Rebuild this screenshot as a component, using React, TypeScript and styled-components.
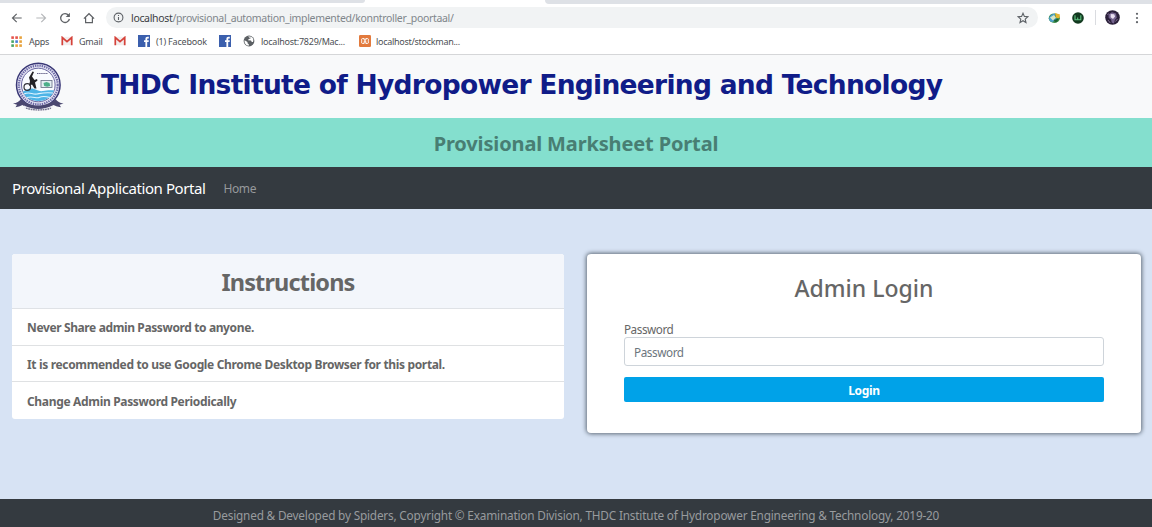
import React from "react";
import styled, { createGlobalStyle } from "styled-components";

const GlobalStyle = createGlobalStyle`
  * { box-sizing: border-box; }
  html, body { margin: 0; padding: 0; }
  body {
    background: #d7e3f4;
    font-family: "Noto Sans", "Open Sans", sans-serif;
    color: #666;
    overflow: hidden;
  }
`;

const Page = styled.div`
  display: flex;
  flex-direction: column;
  width: 1152px;
  height: 527px;
`;

const Label = styled.span<{ $ls?: number }>`
  letter-spacing: ${(p) => p.$ls ?? 0}px;
  white-space: nowrap;
`;

const TabStrip = styled.div`
  display: flex;
  justify-content: space-between;
  height: 4px;
  flex: none;
  background: #fff;
`;

const InactiveTabs = styled.div<{ $width: number; $side: "left" | "right" }>`
  width: ${(p) => p.$width}px;
  height: ${(p) => (p.$side === "left" ? 3 : 4)}px;
  background: #dee1e6;
  border-radius: ${(p) => (p.$side === "left" ? "0 0 4px 0" : "0 0 0 4px")};
`;

const Toolbar = styled.div`
  display: flex;
  align-items: center;
  height: 27px;
  flex: none;
  padding: 0 10px;
  background: #fff;
`;

const NavButtons = styled.div`
  display: flex;
  align-items: center;
  gap: 10px;
  width: 96px;
  svg { display: block; flex: none; }
`;

const AddressBar = styled.div`
  display: flex;
  align-items: center;
  width: 932px;
  height: 21px;
  padding: 0 9px 0 7px;
  border-radius: 11px;
  background: #f1f3f4;
  font-size: 10.5px;
  color: #80868b;
  svg { display: block; flex: none; }
`;

const Url = styled.div`
  flex: 1;
  margin-left: 7px;
  line-height: 20px;
`;

const Host = styled.span`
  color: #3c4043;
`;

const Extensions = styled.div`
  display: flex;
  align-items: center;
  gap: 11px;
  margin-left: 10px;
  svg { display: block; flex: none; }
`;

const Profile = styled.div`
  display: flex;
  align-items: center;
  gap: 15px;
  height: 15px;
  padding-left: 9px;
  border-left: 1px solid #dadce0;
`;

const Bookmarks = styled.div`
  display: flex;
  align-items: center;
  height: 24px;
  flex: none;
  padding: 0 0 3px 11px;
  background: #fff;
  border-bottom: 1px solid #d5d6d8;
  font-size: 9px;
  color: #4d5054;
`;

const Bookmark = styled.div<{ $width: number; $gap?: number }>`
  display: flex;
  align-items: center;
  gap: ${(p) => p.$gap ?? 6}px;
  width: ${(p) => p.$width}px;
  flex: none;
  svg { display: block; flex: none; }
`;

const Header = styled.header`
  display: flex;
  align-items: center;
  height: 63px;
  flex: none;
  padding-left: 12px;
  background: #f8f9fa;
  svg { display: block; flex: none; }
`;

const Title = styled.h1`
  margin: 0 0 3px 37px;
  font-family: "DejaVu Sans", Verdana, sans-serif;
  font-size: 26.5px;
  line-height: 32px;
  font-weight: 700;
  color: #101c88;
`;

const Banner = styled.div`
  display: flex;
  align-items: center;
  justify-content: center;
  height: 49px;
  flex: none;
  padding-top: 2px;
  background: #84dfce;
  font-size: 20px;
  font-weight: 700;
  color: #487e73;
`;

const Navbar = styled.nav`
  display: flex;
  align-items: center;
  height: 42px;
  flex: none;
  padding: 0 12px;
  background: #343a40;
  color: #fff;
  font-size: 15px;
`;

const NavLink = styled.a`
  margin-left: 18px;
  font-size: 12px;
  color: #96999c;
`;

const Main = styled.main`
  display: flex;
  align-items: flex-start;
  gap: 23px;
  flex: 1;
  padding: 45px 11px 0 12px;
  background: #d7e3f4;
`;

const Instructions = styled.section`
  width: 552px;
  height: 165px;
  border-radius: 3px;
  overflow: hidden;
  background: #fff;
`;

const CardHeader = styled.h2`
  display: flex;
  align-items: center;
  justify-content: center;
  height: 55px;
  margin: 0;
  padding-top: 2px;
  background: #f3f6fb;
  border-bottom: 1px solid #dfe2e6;
  font-size: 23.5px;
  font-weight: 700;
`;

const Item = styled.div<{ $last?: boolean }>`
  display: flex;
  align-items: center;
  height: 36.7px;
  padding: 2px 15px 0;
  border-bottom: ${(p) => (p.$last ? "none" : "1px solid #dfe1e3")};
  font-size: 12px;
  font-weight: 700;
`;

const LoginCard = styled.section`
  display: flex;
  flex-direction: column;
  width: 554px;
  flex: none;
  height: 179px;
  padding: 18px 37px 0 37px;
  border-radius: 4px;
  background: #fff;
  box-shadow: 0 0 4px 1px #5f6b78;
`;

const LoginTitle = styled.h2`
  margin: 0;
  text-align: center;
  font-size: 23px;
  line-height: 32px;
  font-weight: 500;
`;

const FieldLabel = styled.label`
  margin-top: 18px;
  font-size: 11.7px;
  line-height: 15px;
`;

const Field = styled.div`
  display: flex;
  align-items: center;
  height: 29px;
  padding: 1px 9px 0;
  border: 1px solid #ced4da;
  border-radius: 3px;
  font-size: 11.7px;
  color: #6c757d;
`;

const LoginButton = styled.button`
  height: 25px;
  margin-top: 11px;
  padding: 1px 0 0;
  border: 0;
  border-radius: 2px;
  background: #00a2e8;
  font-family: inherit;
  font-size: 12px;
  font-weight: 700;
  color: #fff;
`;

const Footer = styled.footer`
  display: flex;
  align-items: center;
  justify-content: center;
  height: 28px;
  flex: none;
  padding-top: 4px;
  background: #343a40;
  font-size: 11.8px;
  color: #989b9e;
`;

const Arrow = ({ color, flip }: { color: string; flip?: boolean }) => (
  <svg width="14" height="14" viewBox="0 0 14 14" fill="none" stroke={color} strokeWidth="1.2">
    <path d={flip ? "M2.3 7h9M7.3 2.8 11.5 7l-4.2 4.2" : "M11.7 7h-9M6.7 2.8 2.5 7l4.2 4.2"} />
  </svg>
);

const Reload = () => (
  <svg width="14" height="14" viewBox="0 0 14 14">
    <path d="M10.6 4.4A4.400 4.400 0 1 0 11.400 8" fill="none" stroke="#5f6266" strokeWidth="1.3" />
    <path d="M11.900 1.800v4.200H7.700z" fill="#5f6266" />
  </svg>
);

const Home = () => (
  <svg width="14" height="14" viewBox="0 0 14 14" fill="none" stroke="#5f6266" strokeWidth="1.2">
    <path d="M1.900 7.600 7 2.700l5.100 4.900M3.600 6.500v5.100h6.800V6.500" />
  </svg>
);

const Info = () => (
  <svg width="11" height="11" viewBox="0 0 11 11" fill="none" stroke="#5f6368" strokeWidth="1.1">
    <circle cx="5.5" cy="5.5" r="4.4" />
    <path d="M5.5 5v3M5.5 2.900v1.200" />
  </svg>
);

const Star = () => (
  <svg width="12" height="12" viewBox="0 0 12 12" fill="none" stroke="#5f6368" strokeWidth="1.1">
    <path d="m6 1.200 1.400 3.200 3.500.3-2.700 2.400.8 3.400-3-1.800-3 1.800.8-3.400L1.100 4.700l3.500-.3z" />
  </svg>
);

const DownloadManager = () => (
  <svg width="13" height="12" viewBox="0 0 13 12">
    <ellipse cx="6.300" cy="6.200" rx="5.600" ry="4.800" fill="#3c8d4b" />
    <path d="M1 6.500C1.500 3.500 4 1.500 7.500 1.400L6 5l3 2-4.500 3C2.500 10 1 8.500 1 6.500z" fill="#4d9fce" />
    <path d="M2 5.500 6 3l2 2.500L5 8.500z" fill="#d7e6c5" />
    <path d="m7 .9 5 1.500-.8 4-3.200-.6z" fill="#e5b52f" />
    <path d="m5.500 8 5.500-1.600L8 10.800z" fill="#1c6133" />
  </svg>
);

const GreenBadge = () => (
  <svg width="12" height="12" viewBox="0 0 12 12">
    <circle cx="6" cy="6" r="5.800" fill="#12391f" />
    <path d="M3 3.300v4.500h2.700V5.500v2.300h3.100V3.300" fill="none" stroke="#5fc481" strokeWidth="1.100" />
  </svg>
);

const Avatar = () => (
  <svg width="15" height="15" viewBox="0 0 15 15">
    <circle cx="7.500" cy="7.500" r="7.300" fill="#2b203a" />
    <path d="M3.500 4.500 7 2.200l4 1.300.8 4.200-2 2.200-.8 3.500-2.300-.8-.6-3L3.700 8z" fill="#75648f" />
    <path d="m5.700 4 3.500.3.900 2.300-2.100 2.300-2.400-1.700z" fill="#e8dff0" />
    <path d="m3 10 2.300 3M10.500 11.500l2-2.500M2.500 5l1-1.500" stroke="#9180a6" strokeWidth=".8" />
  </svg>
);

const Kebab = () => (
  <svg width="4" height="12" viewBox="0 0 4 12" fill="#5f6368">
    <circle cx="2" cy="1.800" r="1.100" />
    <circle cx="2" cy="6" r="1.100" />
    <circle cx="2" cy="10.200" r="1.100" />
  </svg>
);

const appColors = ["#e5534b", "#e5534b", "#e8a33d", "#4aa564", "#4a7fd6", "#e8a33d", "#4aa564", "#e8a33d", "#e8a33d"];

const AppsGrid = () => (
  <svg width="11" height="11" viewBox="0 0 11 11">
    {appColors.map((c, i) => (
      <rect key={i} x={0.3 + (i % 3) * 4} y={0.3 + Math.floor(i / 3) * 4} width="2.600" height="2.600" fill={c} />
    ))}
  </svg>
);

const Gmail = () => (
  <svg width="12" height="10" viewBox="0 0 12 10">
    <rect x=".5" y=".8" width="11" height="8.400" fill="#f3eeee" />
    <path d="M1.300 9.200V1.500L6 5.600l4.700-4.100v7.700" fill="none" stroke="#d6423a" strokeWidth="1.700" />
  </svg>
);

const FacebookIcon = () => (
  <svg width="12" height="12" viewBox="0 0 12 12">
    <rect width="12" height="12" fill="#3b5fad" />
    <path d="M7.400 12V7H6V5.300h1.400V4c0-1.500.9-2.200 2.200-2.200h1.200v1.600H10c-.7 0-.8.3-.8.900v1h1.600L10.600 7H9.200v5z" fill="#fff" />
  </svg>
);

const Globe = () => (
  <svg width="12" height="12" viewBox="0 0 12 12">
    <circle cx="6" cy="6" r="5.400" fill="#5c6064" />
    <path d="M1.600 5.200 4.500 7v1.200l1.300 1v1.500C3 10.600 1.200 8.300 1.600 5.200zM5 1.600l2.500-.2.800.9-1 1.300-1.500.4L5 5.300l3 .3.800 1.500L10 7c.8-2 .3-3.800-1.200-4.900L7 3z" fill="#fff" />
  </svg>
);

const Xampp = () => (
  <svg width="12" height="12" viewBox="0 0 12 12">
    <rect width="12" height="12" rx="1.300" fill="#e27a3d" />
    <path d="M5.200 3.600H3.600c-1.300 0-1.300 1.300-.7 2.400-.6 1.100-.6 2.400.7 2.400h1.600V6.300h1.600v2.100h1.600c1.300 0 1.300-1.300.7-2.400.6-1.100.6-2.400-.7-2.400H6.800v1.600H5.200z" fill="none" stroke="#fff" strokeWidth="1" />
  </svg>
);

const Crest = () => (
  <svg width="52" height="50" viewBox="0 0 52 50">
    <circle cx="26.300" cy="23" r="21.800" fill="#e3e3f2" stroke="#3a3876" strokeWidth="1.500" />
    <circle cx="26.300" cy="23" r="19.400" fill="none" stroke="#6f6ba8" strokeWidth="2.200" strokeDasharray="1.400 .9" />
    <circle cx="26.300" cy="23" r="16.800" fill="#f9fbff" stroke="#5a5796" strokeWidth=".9" />
    <path d="M11 29.500c4-1.500 7-4 11-2.500s6 2.500 9 2 7-1 11-.5c-2 6-8 10.500-15.500 10.500S13 35.500 11 29.500z" fill="#4db4e6" />
    <path d="M12 32c6-3 8 1 13 0s8-2 16-1M15 35.500c6-2 9 1.500 12 0s6-1.500 11 0" fill="none" stroke="#dff4ff" strokeWidth="1.100" />
    <path d="m20.500 9.500 1.500.5-2 4.500 2.500 3.500 2.500-1 .5 1.500-2.500 2 1.500 6h-2l-2.500-4-3 1.500 1-5-1-3.500z" fill="#232227" />
    <circle cx="15.300" cy="25" r="3.300" fill="none" stroke="#34343c" strokeWidth="1.200" />
    <path d="M25 11.500h11" stroke="#6c698f" strokeWidth="1" strokeDasharray="1.500 .6" />
    <rect x="29" y="18.500" width="11" height="7" fill="#e4eef2" stroke="#656c82" strokeWidth=".8" />
    <path d="m31.500 21 3-1 3 1 .7 3-3 .8-3-.8z" fill="#4cae89" />
    <path d="M1 41.500c4-.5 6-2 8-4.500 3.500 4 10 6.500 17 6.500s14-2.500 17.500-6.500c2 2.500 4 4 8 4.500l-4 1.200 1.500 2.500c-4-.3-6-1.500-7.500-2.200-4 3-9 4.200-15.500 4.200S14 46 10.500 43C9 43.700 7 45 3.500 45.200L5 42.700z" fill="#4a4770" />
    <path d="M12 43.500c9 4.600 19.500 4.600 28.500 0v2.800c-9 3.200-19.500 3.200-28.500 0z" fill="#eeeef5" />
    <path d="M14 46.200c8 2.300 17 2.300 25 0" fill="none" stroke="#74738b" strokeWidth="1.400" strokeDasharray="1.700 .7" />
  </svg>
);

export default function App() {
  return (
    <Page>
      <GlobalStyle />
      <TabStrip>
        <InactiveTabs $width={365} $side="left" />
        <InactiveTabs $width={607} $side="right" />
      </TabStrip>
      <Toolbar>
        <NavButtons>
          <Arrow color="#5f6266" />
          <Arrow color="#b5b7ba" flip />
          <Reload />
          <Home />
        </NavButtons>
        <AddressBar>
          <Info />
          <Url>
            <Label $ls={-0.33}>
              <Host>localhost</Host>/provisional_automation_implemented/konntroller_poortaal/
            </Label>
          </Url>
          <Star />
        </AddressBar>
        <Extensions>
          <DownloadManager />
          <GreenBadge />
          <Profile>
            <Avatar />
            <Kebab />
          </Profile>
        </Extensions>
      </Toolbar>
      <Bookmarks>
        <Bookmark $width={50} $gap={7}><AppsGrid /><Label $ls={-0.25}>Apps</Label></Bookmark>
        <Bookmark $width={53}><Gmail /><Label $ls={-0.2}>Gmail</Label></Bookmark>
        <Bookmark $width={24}><Gmail /></Bookmark>
        <Bookmark $width={81}><FacebookIcon /><Label $ls={-0.2}>(1) Facebook</Label></Bookmark>
        <Bookmark $width={24}><FacebookIcon /></Bookmark>
        <Bookmark $width={116}><Globe /><Label $ls={-0.25}>localhost:7829/Mac...</Label></Bookmark>
        <Bookmark $width={110} $gap={5}><Xampp /><Label $ls={-0.28}>localhost/stockman...</Label></Bookmark>
      </Bookmarks>
      <Header>
        <Crest />
        <Title><Label $ls={-0.72}>THDC Institute of Hydropower Engineering and Technology</Label></Title>
      </Header>
      <Banner><Label $ls={-0.14}>Provisional Marksheet Portal</Label></Banner>
      <Navbar>
        <Label $ls={-0.41}>Provisional Application Portal</Label>
        <NavLink><Label $ls={-0.4}>Home</Label></NavLink>
      </Navbar>
      <Main>
        <Instructions>
          <CardHeader><Label $ls={-0.85}>Instructions</Label></CardHeader>
          <Item><Label $ls={-0.38}>Never Share admin Password to anyone.</Label></Item>
          <Item><Label $ls={-0.34}>It is recommended to use Google Chrome Desktop Browser for this portal.</Label></Item>
          <Item $last><Label $ls={-0.33}>Change Admin Password Periodically</Label></Item>
        </Instructions>
        <LoginCard>
          <LoginTitle><Label>Admin Login</Label></LoginTitle>
          <FieldLabel><Label $ls={-0.45}>Password</Label></FieldLabel>
          <Field><Label $ls={-0.4}>Password</Label></Field>
          <LoginButton><Label $ls={-0.3}>Login</Label></LoginButton>
        </LoginCard>
      </Main>
      <Footer>
        <Label $ls={-0.19}>Designed &amp; Developed by Spiders, Copyright © Examination Division, THDC Institute of Hydropower Engineering &amp; Technology, 2019-20</Label>
      </Footer>
    </Page>
  );
}
